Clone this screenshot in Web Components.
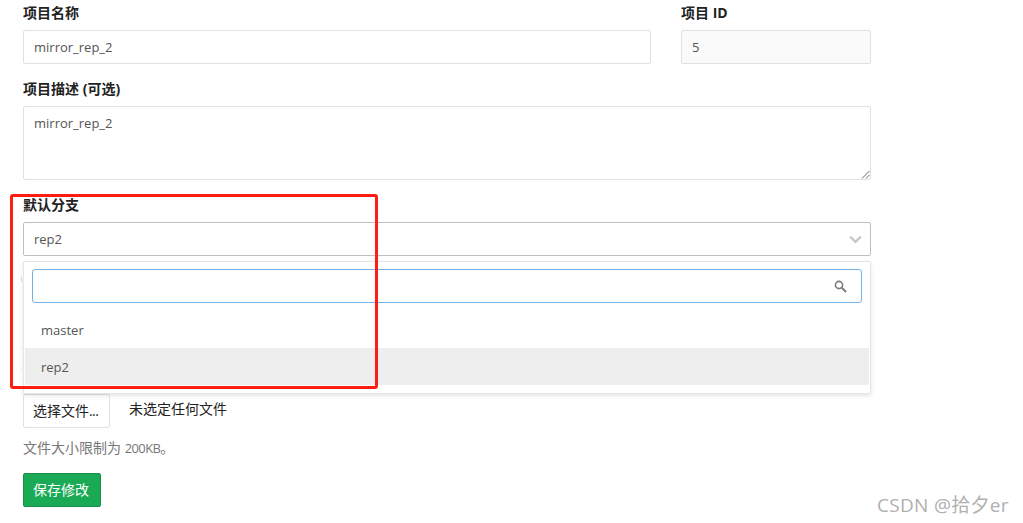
<!DOCTYPE html>
<html>
<head>
<meta charset="utf-8">
<title>项目设置</title>
<style>
html,body{margin:0;padding:0;background:#fff;}
body{width:1023px;height:523px;overflow:hidden;position:relative;font-family:"Open Sans","Noto Sans CJK SC",sans-serif;font-size:14px;color:#333;}
</style>
</head>
<body>
<settings-page>
  <div class="row" slot="top">
    <form-field style="flex:0 0 628px" label="项目名称"><text-box>mirror_rep_2</text-box></form-field>
    <form-field style="flex:0 0 190px" label="项目 ID"><text-box readonly>5</text-box></form-field>
  </div>
  <form-field slot="desc" label="项目描述 (可选)"><text-area>mirror_rep_2</text-area></form-field>
  <form-field slot="branch" label="默认分支">
    <branch-select value="rep2">
      <branch-option>master</branch-option>
      <branch-option active>rep2</branch-option>
    </branch-select>
  </form-field>
  <file-picker slot="file"></file-picker>
  <span slot="help">文件大小限制为 <span style="font-size:13px;letter-spacing:-.6px">200KB</span>。</span>
  <save-button slot="save">保存修改</save-button>
</settings-page>
<red-mark></red-mark>
<water-mark>CSDN @拾夕er</water-mark>

<script>
class SettingsPage extends HTMLElement{
  constructor(){
    super();
    this.attachShadow({mode:'open'}).innerHTML=`
      <style>
        :host{display:block;width:848px;padding:3px 0 0 23px;}
        .top{display:flex;}
        ::slotted(.row){display:flex;gap:30px;}
        .desc{margin-top:15px;}
        .branch{margin-top:15px;}
        .file{margin-top:138px;}
        .help{margin-top:11px;height:18px;line-height:18px;color:#777;}
        .save{margin-top:16px;}
      </style>
      <div class="top"><slot name="top"></slot></div>
      <div class="desc"><slot name="desc"></slot></div>
      <div class="branch"><slot name="branch"></slot></div>
      <div class="file"><slot name="file"></slot></div>
      <div class="help"><slot name="help"></slot></div>
      <div class="save"><slot name="save"></slot></div>
    `;
  }
}
class FormField extends HTMLElement{
  constructor(){
    super();
    this.attachShadow({mode:'open'}).innerHTML=`
      <style>
        :host{display:block;}
        label{display:block;height:18px;line-height:20px;margin-bottom:9px;font-weight:700;color:#222;}
      </style>
      <label></label>
      <slot></slot>
    `;
    this.shadowRoot.querySelector('label').textContent=this.getAttribute('label');
  }
}
class TextBox extends HTMLElement{
  constructor(){
    super();
    this.attachShadow({mode:'open'}).innerHTML=`
      <style>
        :host{display:block;box-sizing:border-box;height:34px;line-height:32px;padding:0 10px;border:1px solid #e1e1e1;border-radius:2px;background:#fff;color:#555;font-size:13px;}
        :host([readonly]){background:#fafafa;}
      </style>
      <slot></slot>
    `;
  }
}
class TextArea extends HTMLElement{
  constructor(){
    super();
    this.attachShadow({mode:'open'}).innerHTML=`
      <style>
        :host{display:block;position:relative;box-sizing:border-box;height:74px;line-height:18px;padding:7px 10px;border:1px solid #e1e1e1;border-radius:2px;color:#555;font-size:13px;}
        svg{position:absolute;right:0;bottom:0;}
      </style>
      <slot></slot>
      <svg width="9" height="9" viewBox="0 0 9 9" fill="none" stroke="#666" stroke-width="1">
        <path d="M1 8.5 8.5 1M5 8.5 8.5 5"/>
      </svg>
    `;
  }
}
class BranchSelect extends HTMLElement{
  constructor(){
    super();
    this.attachShadow({mode:'open'}).innerHTML=`
      <style>
        :host{display:block;position:relative;}
        .box{display:flex;align-items:center;justify-content:space-between;box-sizing:border-box;height:34px;padding:0 8px 0 10px;border:1px solid #bfbfbf;border-radius:2px;color:#555;font-size:13px;}
        .menu{position:absolute;left:0;right:0;top:39px;box-sizing:border-box;height:133px;padding:7px 1px 8px;background:#fff;border:1px solid #e5e5e5;border-radius:2px;box-shadow:0 2px 4px rgba(0,0,0,.1);}
        .search{display:flex;align-items:center;justify-content:flex-end;box-sizing:border-box;height:34px;margin:0 7px 8px;padding-right:14px;border:1px solid #73b1e6;border-radius:3px;}
        .peek{position:absolute;left:-2px;width:1px;background:#f7d9a8;}
      </style>
      <div class="box">
        <span class="val"></span>
        <svg width="13" height="9" viewBox="0 0 13 9" fill="none" stroke="#c4c9cc" stroke-width="2.4"><path d="M1.2 1.6 6.5 6.8 11.8 1.6"/></svg>
      </div>
      <i class="peek" style="top:55px;height:5px"></i>
      <i class="peek" style="top:126px;height:1px"></i>
      <i class="peek" style="top:147px;height:1px"></i>
      <div class="menu">
        <div class="search">
          <svg width="13" height="13" viewBox="0 0 13 13" fill="none" stroke="#7c7c7c"><circle cx="5" cy="5" r="3.6" stroke-width="1.6"/><path d="M7.8 7.8 12 12" stroke-width="2"/></svg>
        </div>
        <slot></slot>
      </div>
    `;
    this.shadowRoot.querySelector('.val').textContent=this.getAttribute('value');
  }
}
class BranchOption extends HTMLElement{
  constructor(){
    super();
    this.attachShadow({mode:'open'}).innerHTML=`
      <style>
        :host{display:block;height:37px;line-height:38px;padding-left:16px;color:#555;font-size:13px;}
        :host([active]){background:#eee;}
      </style>
      <slot></slot>
    `;
  }
}
class FilePicker extends HTMLElement{
  constructor(){
    super();
    this.attachShadow({mode:'open'}).innerHTML=`
      <style>
        :host{display:flex;align-items:flex-start;gap:19px;color:#222;}
        .btn{box-sizing:border-box;width:87px;height:34px;line-height:32px;padding-left:9px;border:1px solid #e1e1e1;border-radius:2px;background:#fff;white-space:nowrap;}
        .btn span{letter-spacing:-.6px;}
        .name{line-height:30px;}
      </style>
      <div class="btn">选择文件<span>...</span></div>
      <div class="name">未选定任何文件</div>
    `;
  }
}
class SaveButton extends HTMLElement{
  constructor(){
    super();
    this.attachShadow({mode:'open'}).innerHTML=`
      <style>
        :host{display:block;box-sizing:border-box;width:78px;height:34px;line-height:32px;padding-left:9px;background:#1aaa55;border:1px solid #168f48;border-radius:2px;color:#fff;}
      </style>
      <slot></slot>
    `;
  }
}
class RedMark extends HTMLElement{
  constructor(){
    super();
    this.attachShadow({mode:'open'}).innerHTML=`
      <style>
        :host{position:absolute;left:10px;top:194px;width:368px;height:195px;box-sizing:border-box;border:3px solid #fe1c13;border-radius:3px;}
      </style>
    `;
  }
}
class WaterMark extends HTMLElement{
  constructor(){
    super();
    this.attachShadow({mode:'open'}).innerHTML=`
      <style>
        :host{position:absolute;left:877px;top:491px;line-height:28px;font-size:19px;letter-spacing:.3px;color:#b0b0b0;white-space:nowrap;}
      </style>
      <slot></slot>
    `;
  }
}
customElements.define('settings-page',SettingsPage);
customElements.define('form-field',FormField);
customElements.define('text-box',TextBox);
customElements.define('text-area',TextArea);
customElements.define('branch-select',BranchSelect);
customElements.define('branch-option',BranchOption);
customElements.define('file-picker',FilePicker);
customElements.define('save-button',SaveButton);
customElements.define('red-mark',RedMark);
customElements.define('water-mark',WaterMark);
</script>
</body>
</html>
